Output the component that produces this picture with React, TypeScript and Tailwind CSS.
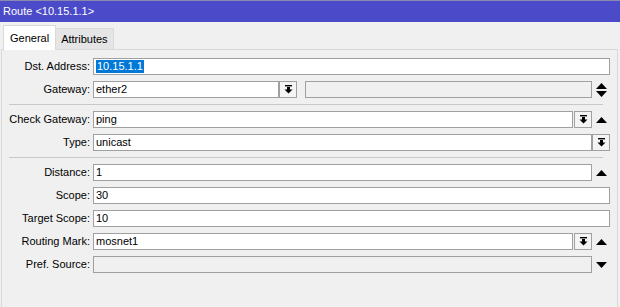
import type { ReactNode } from 'react'

const font = { fontFamily: 'Tahoma, "Liberation Sans", Arial, sans-serif' }

function DropBtn() {
  return (
    <div className="w-[18px] h-[17px] border border-[#a0a0a0] bg-[#f4f4f4] flex items-center justify-center shrink-0">
      <svg width="9" height="9" viewBox="0 0 9 9">
        <rect x="1" y="0" width="7" height="1.4" fill="#000" />
        <rect x="3" y="2" width="3" height="3" fill="#000" />
        <path d="M0.5 4.5 H8.5 L4.5 8.5 Z" fill="#000" />
      </svg>
    </div>
  )
}

function Up() {
  return (
    <svg width="11" height="6" viewBox="0 0 11 6">
      <path d="M5.5 0 L11 6 H0 Z" fill="#000" />
    </svg>
  )
}

function Down() {
  return (
    <svg width="11" height="6" viewBox="0 0 11 6">
      <path d="M0 0 H11 L5.5 6 Z" fill="#000" />
    </svg>
  )
}

function Field({ value, disabled, selected, className }: { value?: string; disabled?: boolean; selected?: boolean; className?: string }) {
  return (
    <div
      className={`h-[17px] border border-[#a0a0a0] flex items-center pl-[2px] text-[11px] leading-none text-black min-w-0 ${disabled ? 'bg-[#f0f0f0]' : 'bg-white'} ${className ?? 'flex-1'}`}
    >
      {value && (
        <span className={selected ? 'bg-[#0078d7] text-white px-[1px] leading-[13px]' : ''}>{value}</span>
      )}
    </div>
  )
}

function Row({ label, children, arrow }: { label: string; children: ReactNode; arrow?: ReactNode }) {
  return (
    <div className="flex items-center h-[17px] mb-[6px]">
      <div className="w-[88px] text-right text-[11px] text-black mr-[3px] whitespace-nowrap">{label}:</div>
      <div className="flex-1 flex items-center min-w-0">{children}</div>
      {arrow !== undefined && <div className="w-[17px] ml-[1px] flex items-center justify-center">{arrow}</div>}
    </div>
  )
}

function Sep() {
  return <div className="h-px bg-[#c8c8c8] ml-[7px] mr-[7px] mt-[1px] mb-[6px]" />
}

export default function App() {
  return (
    <div className="w-[620px] h-[307px] bg-[#f0f0f0] overflow-hidden flex flex-col" style={font}>
      <div className="h-[22px] bg-[#4b4bc9] border-t border-[#8a8ab0] text-white text-[11px] flex items-center pl-[3px]">
        Route &lt;10.15.1.1&gt;
      </div>
      <div className="h-[27px] flex items-end pl-[3px] relative">
        <div className="h-[25px] px-[6px] bg-white border border-b-0 border-[#d9d9d9] text-[11px] flex items-center relative z-10 -mb-[1px]">
          General
        </div>
        <div className="h-[21px] px-[5px] bg-[#e5e5e5] border border-b-0 border-l-0 border-[#d9d9d9] text-[11px] flex items-center">
          Attributes
        </div>
      </div>
      <div className="flex-1 border-t border-l border-r border-[#d9d9d9] ml-[1px] mr-[2px] pt-[8px] pr-[7px]">
        <Row label="Dst. Address">
          <Field value="10.15.1.1" selected />
        </Row>
        <Row
          label="Gateway"
          arrow={
            <div className="flex flex-col gap-[2px]">
              <Up />
              <Down />
            </div>
          }
        >
          <Field value="ether2" className="w-[186px]" />
          <DropBtn />
          <div className="w-[8px]" />
          <Field disabled />
        </Row>
        <Sep />
        <Row label="Check Gateway" arrow={<Up />}>
          <Field value="ping" />
          <div className="w-[1px]" />
          <DropBtn />
        </Row>
        <Row label="Type">
          <Field value="unicast" />
          <DropBtn />
        </Row>
        <Sep />
        <Row label="Distance" arrow={<Up />}>
          <Field value="1" />
        </Row>
        <Row label="Scope">
          <Field value="30" />
        </Row>
        <Row label="Target Scope">
          <Field value="10" />
        </Row>
        <Row label="Routing Mark" arrow={<Up />}>
          <Field value="mosnet1" />
          <div className="w-[1px]" />
          <DropBtn />
        </Row>
        <Row label="Pref. Source" arrow={<Down />}>
          <Field disabled />
        </Row>
      </div>
    </div>
  )
}
